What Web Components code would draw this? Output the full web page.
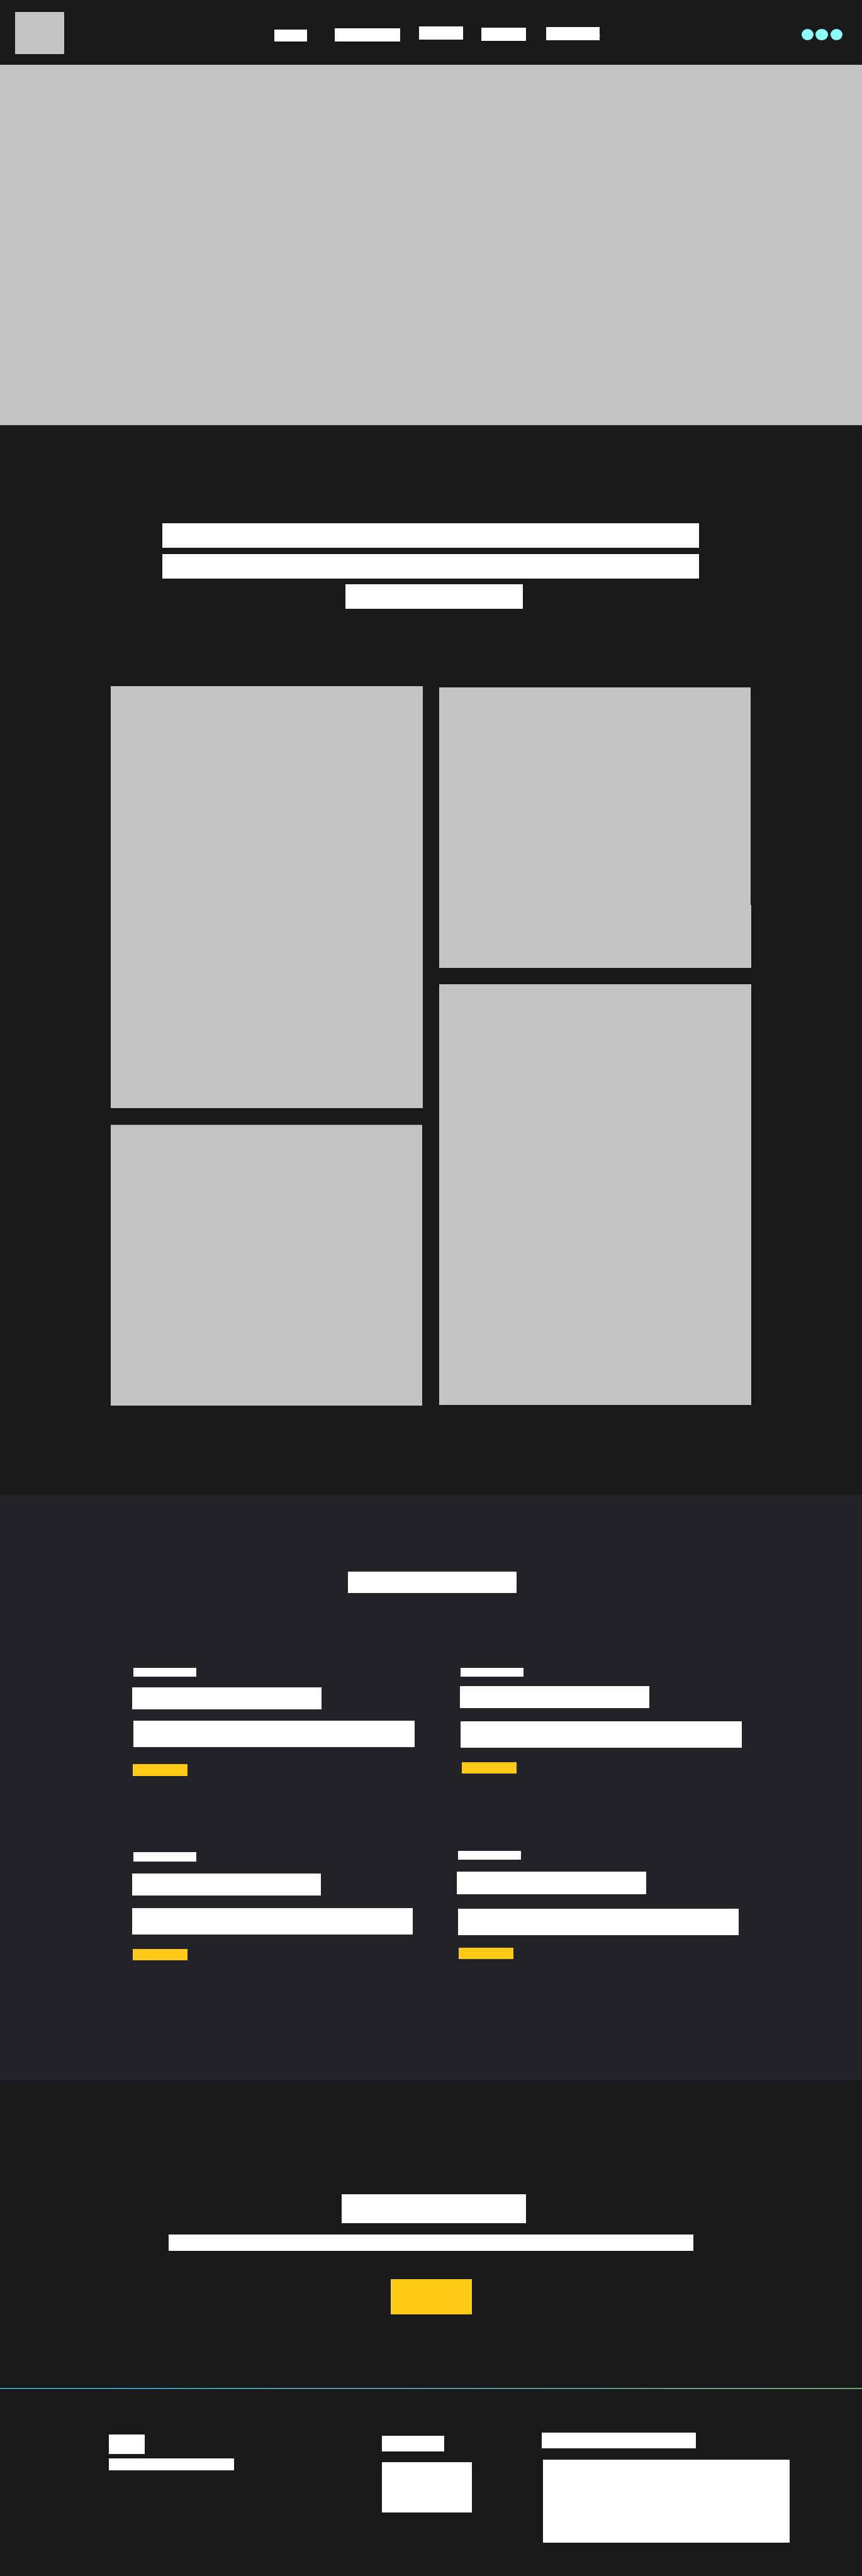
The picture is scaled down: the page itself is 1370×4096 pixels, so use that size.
<!DOCTYPE html>
<html lang="en">
<head>
<meta charset="utf-8">
<title>Wireframe</title>
<style>
  /* --u and --v are one design unit across and down */
  :root { --u: calc(1370px / 1920); --v: calc(4096px / 5742); }
  body { margin: 0; background: #17191a; font-family: "Liberation Sans", sans-serif; }
</style>
</head>
<body>
<wire-page></wire-page>
<script>
const UNIT = (n, axis) => `calc(${n} * var(--${axis}))`;

/* A flat placeholder block: w, h, and its space from what precedes it (mt, ml). */
class WireBlock extends HTMLElement {
  connectedCallback() {
    const a = (k) => this.getAttribute(k) || 0;
    const tones = { white: '#fff', grey: '#c3c3c3', yellow: '#ffca18', cyan: '#8cfffb' };
    const root = this.attachShadow({ mode: 'open' });
    root.innerHTML = `<style>
      :host { display: block; flex: none; box-sizing: border-box;
        width: ${UNIT(a('w'), 'u')}; height: ${UNIT(a('h'), 'v')};
        margin-top: ${UNIT(a('mt'), 'v')}; margin-left: ${UNIT(a('ml'), 'u')};
        background: ${tones[this.getAttribute('tone') || 'white']}; }
      :host([round]) { border-radius: 50%; }
      :host([edge]) { border-top: ${UNIT(2, 'v')} solid #696867; }
    </style><slot></slot>`;
  }
}

/* A flex stack, in a column or a row, with its own padding. */
class WireStack extends HTMLElement {
  connectedCallback() {
    const a = (k) => this.getAttribute(k) || 0;
    const root = this.attachShadow({ mode: 'open' });
    root.innerHTML = `<style>
      :host { display: flex; flex-direction: column; align-items: flex-start; flex: none;
        ${this.hasAttribute('w') ? `width: ${UNIT(a('w'), 'u')};` : ''}
        ${this.hasAttribute('h') ? `height: ${UNIT(a('h'), 'v')};` : ''}
        padding-top: ${UNIT(a('pt'), 'v')}; padding-left: ${UNIT(a('pl'), 'u')};
        box-sizing: border-box; }
      :host([row]) { flex-direction: row; }
    </style><slot></slot>`;
  }
}

class WireHeader extends HTMLElement {
  connectedCallback() {
    this.attachShadow({ mode: 'open' }).innerHTML = `<style>
      :host { display: flex; align-items: flex-start; height: calc(145 * var(--v)); }
      nav, div { display: flex; align-items: flex-start; }
    </style>
    <wire-block tone="grey" w="109" h="94" mt="27" ml="34"></wire-block>
    <nav>
      <wire-block w="73" h="27" mt="66" ml="468"></wire-block>
      <wire-block w="147" h="30" mt="63" ml="61"></wire-block>
      <wire-block w="99" h="30" mt="59" ml="41"></wire-block>
      <wire-block w="99" h="30" mt="61" ml="40"></wire-block>
      <wire-block w="119" h="30" mt="60" ml="45"></wire-block>
      <wire-block w="2" h="2" mt="78"></wire-block>
    </nav>
    <div>
      <wire-block round tone="cyan" w="27" h="26" mt="64" ml="448"></wire-block>
      <wire-block round tone="cyan" w="27" h="26" mt="64" ml="5"></wire-block>
      <wire-block round tone="cyan" w="27" h="26" mt="64" ml="6"></wire-block>
    </div>`;
  }
}

class WireGallery extends HTMLElement {
  connectedCallback() {
    this.attachShadow({ mode: 'open' }).innerHTML = `<style>
      :host { display: block; height: calc(2384 * var(--v)); }
    </style>
    <wire-stack h="581" pt="218">
      <wire-block w="1195" h="55" ml="362"></wire-block>
      <wire-block w="1195" h="55" mt="14" ml="362"></wire-block>
      <wire-block w="394" h="55" mt="12" ml="770"></wire-block>
    </wire-stack>
    <wire-stack row pl="247">
      <wire-stack w="731">
        <wire-block tone="grey" w="695" h="941"></wire-block>
        <wire-block edge tone="grey" w="694" h="626" mt="37"></wire-block>
      </wire-stack>
      <wire-stack>
        <wire-block tone="grey" w="694" h="485" mt="3"></wire-block>
        <wire-block tone="grey" w="695" h="140"></wire-block>
        <wire-block tone="grey" w="695" h="938" mt="37"></wire-block>
      </wire-stack>
    </wire-stack>`;
  }
}

/* Teaser card: tag, title, text and button; each pair is "left offset, space above". */
class WireCard extends HTMLElement {
  connectedCallback() {
    const p = this.getAttribute('offsets').split(' ');
    const part = (i, w, h, tone) =>
      `<wire-block tone="${tone}" w="${w}" h="${h}" ml="${p[i * 2]}" mt="${p[i * 2 + 1]}"></wire-block>`;
    this.attachShadow({ mode: 'open' }).innerHTML = `<style>
      :host { display: flex; flex-direction: column; align-items: flex-start;
        width: calc(724 * var(--u)); height: calc(411 * var(--v)); }
    </style>` + part(0, 140, 20, 'white') + part(1, 421, 50, 'white')
      + part(2, 626, 59, 'white') + part(3, 121, 26, 'yellow');
  }
}

class WireTeasers extends HTMLElement {
  connectedCallback() {
    this.attachShadow({ mode: 'open' }).innerHTML = `<style>
      :host { display: flex; flex-direction: column; background: #222326;
        height: calc(1305 * var(--v)); }
      section { display: grid; grid-template-columns: repeat(2, calc(724 * var(--u)));
        padding: calc(167 * var(--v)) 0 0 calc(294 * var(--u)); }
    </style>
    <wire-block w="376" h="48" mt="171" ml="775"></wire-block>
    <section>
      <wire-card offsets="3 0 1 23 3 24 2 39"></wire-card>
      <wire-card offsets="8 0 7 20 8 29 11 32"></wire-card>
      <wire-card offsets="3 0 0 27 0 27 2 32"></wire-card>
      <wire-card offsets="2 -3 0 26 2 33 4 27"></wire-card>
    </section>`;
  }
}

class WireCta extends HTMLElement {
  connectedCallback() {
    this.attachShadow({ mode: 'open' }).innerHTML = `<style>
      :host { display: flex; flex-direction: column; height: calc(686 * var(--v));
        padding-top: calc(254 * var(--v)); box-sizing: border-box; }
    </style>
    <wire-block w="411" h="64" ml="761"></wire-block>
    <wire-block w="1169" h="36" mt="26" ml="375"></wire-block>
    <wire-block tone="yellow" w="180" h="79" mt="63" ml="871"></wire-block>`;
  }
}

class WireFooter extends HTMLElement {
  connectedCallback() {
    this.attachShadow({ mode: 'open' }).innerHTML = `<style>
      :host { display: flow-root; height: calc(419 * var(--v)); overflow: hidden; }
      /* a hairline of about one and a half pixels: the second row is fainter */
      hr { margin: 0 0 calc(2 * var(--v) - 2px); border: 0; height: 2px;
        background: linear-gradient(90deg, #53b4f0 12%, #69c3c6 52%, #83cf8c);
        -webkit-mask-image: linear-gradient(#000 50%, rgba(0, 0, 0, .5) 50%);
        mask-image: linear-gradient(#000 50%, rgba(0, 0, 0, .5) 50%); }
    </style>
    <hr>
    <wire-stack row pl="242">
      <wire-stack w="608">
        <wire-block w="80" h="43" mt="102" ml="1"></wire-block>
        <wire-block w="280" h="27" mt="10"></wire-block>
      </wire-stack>
      <wire-stack w="357">
        <wire-block w="139" h="35" mt="104"></wire-block>
        <wire-block w="201" h="112" mt="24"></wire-block>
      </wire-stack>
      <wire-stack>
        <wire-block w="343" h="35" mt="98"></wire-block>
        <wire-block w="549" h="185" mt="25" ml="3"></wire-block>
      </wire-stack>
    </wire-stack>`;
  }
}

class WirePage extends HTMLElement {
  connectedCallback() {
    this.attachShadow({ mode: 'open' }).innerHTML = `<style>
      :host { display: block; width: 1370px; height: 4096px; overflow: hidden; }
    </style>
    <wire-header></wire-header>
    <wire-block tone="grey" w="1920" h="803"></wire-block>
    <wire-gallery></wire-gallery>
    <wire-teasers></wire-teasers>
    <wire-cta></wire-cta>
    <wire-footer></wire-footer>`;
  }
}

customElements.define('wire-block', WireBlock);
customElements.define('wire-stack', WireStack);
customElements.define('wire-header', WireHeader);
customElements.define('wire-gallery', WireGallery);
customElements.define('wire-card', WireCard);
customElements.define('wire-teasers', WireTeasers);
customElements.define('wire-cta', WireCta);
customElements.define('wire-footer', WireFooter);
customElements.define('wire-page', WirePage);
</script>
</body>
</html>
